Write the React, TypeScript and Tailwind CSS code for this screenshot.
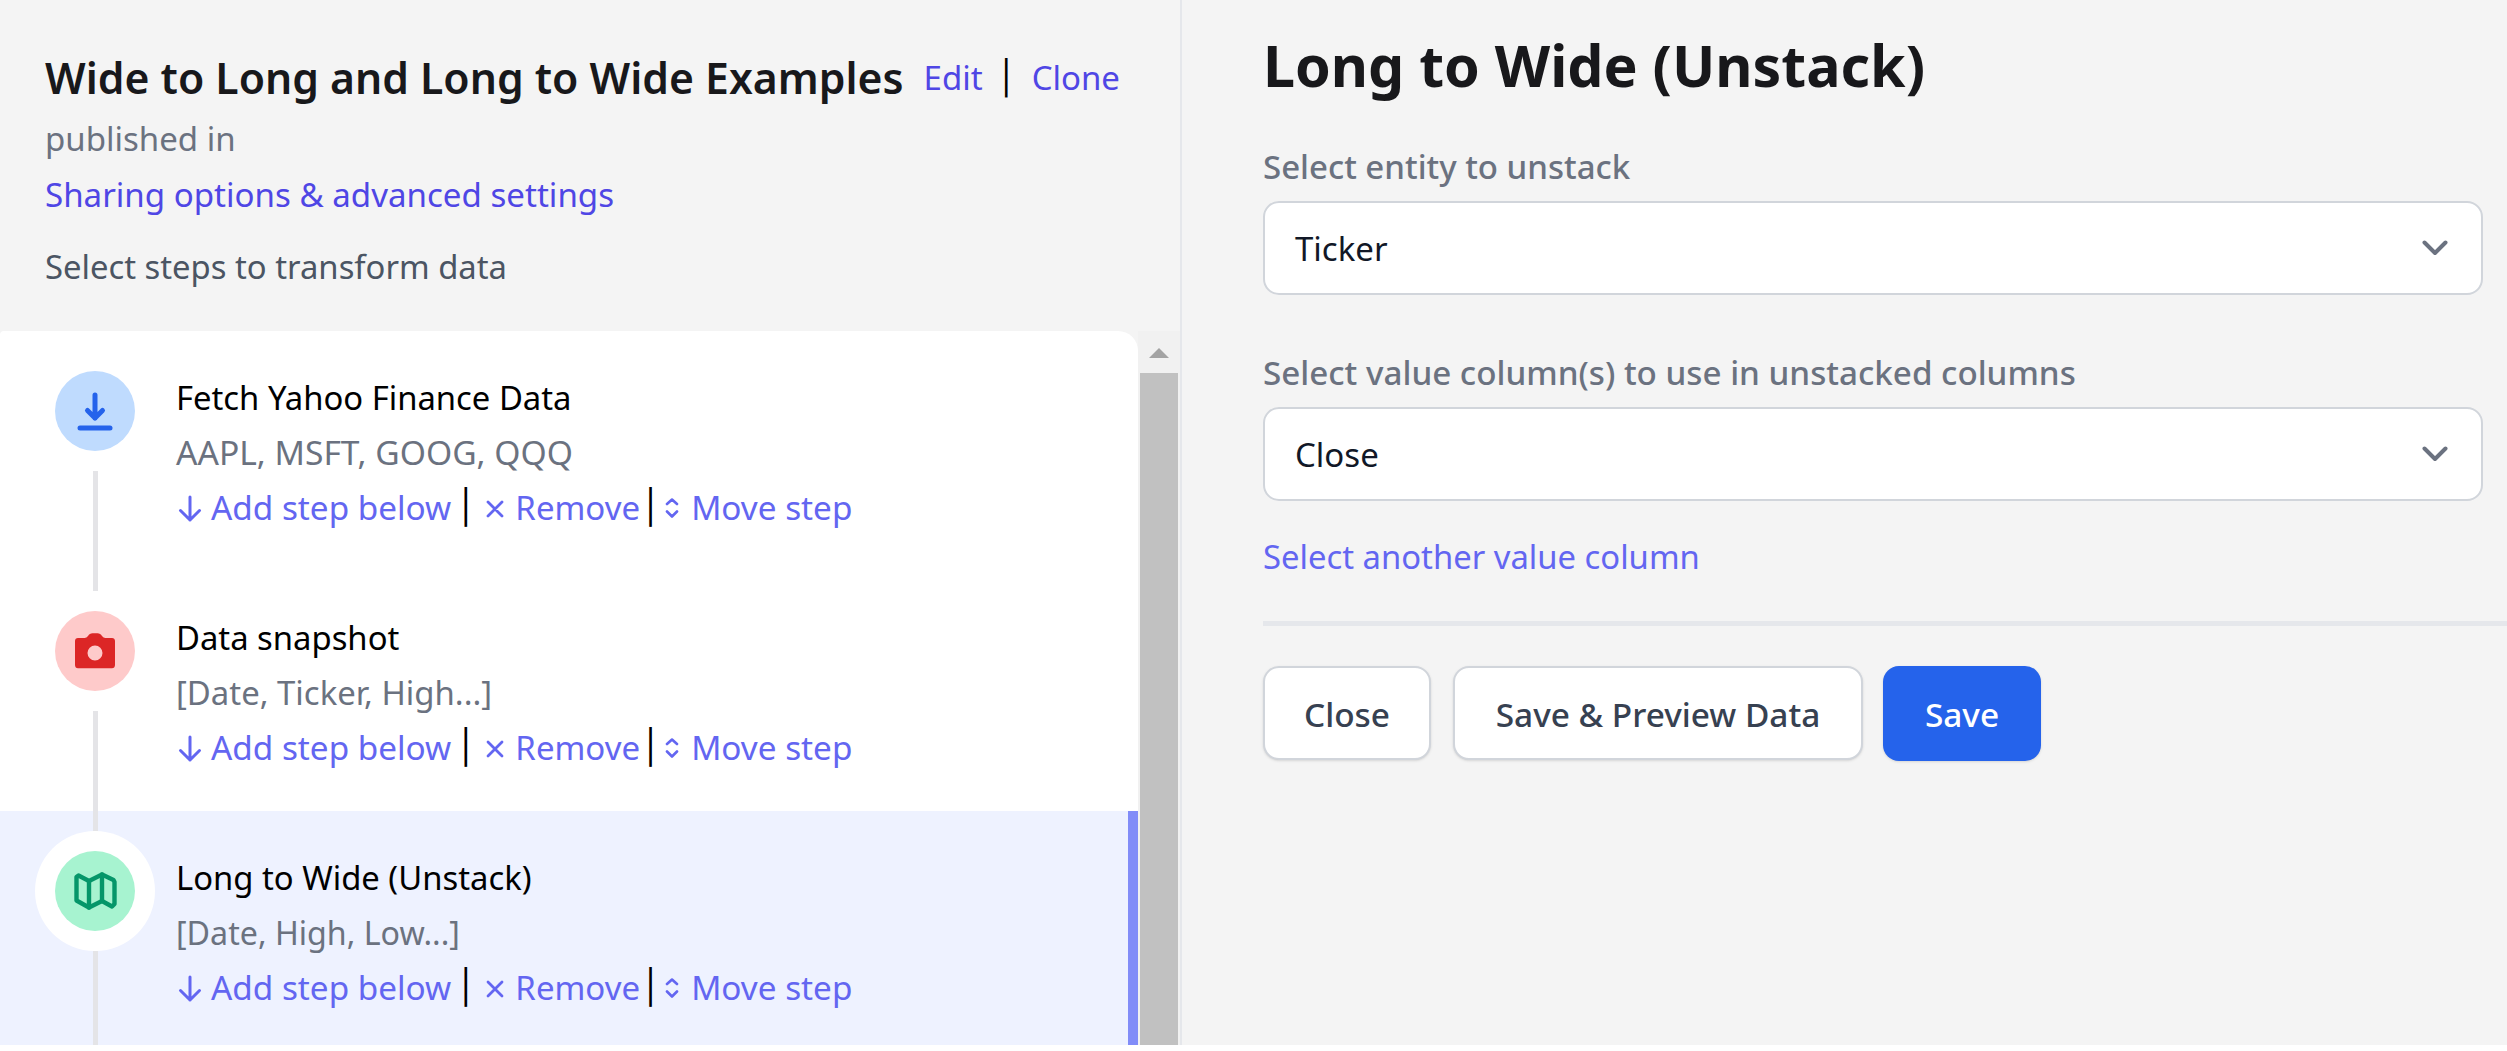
import React from "react";

function DownloadIcon() {
  return (
    <svg viewBox="0 0 80 80" className="h-[80px] w-[80px]" fill="none" stroke="#2563eb" strokeWidth="5" strokeLinecap="round" strokeLinejoin="round">
      <path d="M40 24V47M32.5 39.5L40 47L47.5 39.5" />
      <path d="M25 57H55" />
    </svg>
  );
}

function CameraIcon() {
  return (
    <svg viewBox="0 0 80 80" className="h-[80px] w-[80px]">
      <path
        fill="#dc2626"
        fillRule="evenodd"
        d="M23 27H29.5C31 27 32 26.2 33 25C34.2 23.3 35.5 22.3 37.5 22.3H42.5C44.5 22.3 45.8 23.3 47 25C48 26.2 49 27 50.5 27H57C58.8 27 60 28.2 60 30V54C60 56 58.8 57.3 57 57.3H23C21.2 57.3 20 56 20 54V30C20 28.2 21.2 27 23 27ZM40 34.5A7.5 7.5 0 1 0 40 49.5A7.5 7.5 0 1 0 40 34.5Z"
      />
    </svg>
  );
}

function MapIcon() {
  return (
    <svg viewBox="0 0 80 80" className="h-[80px] w-[80px]" fill="none" stroke="#059669" strokeWidth="4.4" strokeLinecap="round" strokeLinejoin="round">
      <path d="M21.5 26L23.5 24.5L34 30L47 23.5L58.5 29L59.5 31V53L57 55.5L47 50L34 56.5L21.5 49.5V26Z" />
      <path d="M34 30V56.5M47 23.5V50" />
    </svg>
  );
}

function Actions() {
  return (
    <div className="flex h-[55px] items-center text-[33.3px] leading-[55px] text-[#6366f1]">
      <svg viewBox="0 0 24 28" className="mt-[4px] ml-[2px] h-[28px] w-[24px]" fill="none" stroke="currentColor" strokeWidth="3" strokeLinecap="round" strokeLinejoin="round">
        <path d="M12 2V25M2.5 15.5L12 25L21.5 15.5" />
      </svg>
      <span className="ml-[9px]">Add step below</span>
      <span className="ml-[9px] font-[Inter,sans-serif] text-black">|</span>
      <svg viewBox="0 0 20 20" className="mt-[4px] ml-[14px] h-[20px] w-[20px]" fill="none" stroke="currentColor" strokeWidth="2.8" strokeLinecap="round">
        <path d="M3 3L17 17M17 3L3 17" />
      </svg>
      <span className="ml-[10px] text-[33px]">Remove</span>
      <span className="ml-[5px] font-[Inter,sans-serif] text-black">|</span>
      <svg viewBox="0 0 14 20" className="mt-[2px] ml-[9px] h-[20px] w-[14px]" fill="none" stroke="currentColor" strokeWidth="2.6" strokeLinecap="round" strokeLinejoin="round">
        <path d="M2 6L7 1.5L12 6M2 13.5L7 18.5L12 13.5" />
      </svg>
      <span className="ml-[12px]">Move step</span>
    </div>
  );
}

function Step({
  title,
  desc,
  circle,
  icon,
  active,
  descClass,
}: {
  title: string;
  desc: string;
  circle: string;
  icon: React.ReactNode;
  active?: boolean;
  descClass: string;
}) {
  return (
    <div className={active ? "relative h-[240px] shrink-0 bg-[#eef2ff]" : "relative h-[240px] shrink-0"}>
      <div className="absolute top-[140px] left-[93px] z-10 h-[120px] w-[5px] bg-[#e4e4e7]" />
      {active && <div className="absolute top-0 right-0 h-full w-[10px] bg-[#818cf8]" />}
      <div className="flex pt-[39px] pl-[55px]">
        <div className={`relative z-20 mt-px flex h-[80px] w-[80px] shrink-0 items-center justify-center rounded-full ${circle} ${active ? "ring-[20px] ring-white" : ""}`}>
          {icon}
        </div>
        <div className="ml-[41px] flex flex-col">
          <div className="text-[32.8px] leading-[56px] text-black">{title}</div>
          <div className={`-mt-[1.5px] leading-[55px] text-[#6b7280] ${descClass}`}>{desc}</div>
          <Actions />
        </div>
      </div>
    </div>
  );
}

function SelectBox({ value }: { value: string }) {
  return (
    <div className="flex h-[94px] items-center justify-between rounded-[16px] border-2 border-[#d1d5db] bg-white pr-[33px] pl-[30px] text-[33px] text-[#111827]">
      <span className="pt-[2px]">{value}</span>
      <svg viewBox="0 0 26 16" className="h-[16px] w-[26px]" fill="none" stroke="#6b7280" strokeWidth="4" strokeLinecap="round" strokeLinejoin="round">
        <path d="M2.5 2.5L13 13L23.5 2.5" />
      </svg>
    </div>
  );
}

export default function App() {
  return (
    <div className="h-[1051px] w-full overflow-hidden bg-white font-['Noto_Sans',sans-serif]">
      <div className="flex h-[1045px] bg-[#f4f4f4]">
        <aside className="flex w-[1182px] shrink-0 flex-col border-r-2 border-[#e5e7eb]">
          <header className="h-[331px] shrink-0 pt-[50px] pl-[45px]">
            <div className="flex h-[56px] items-center text-[33px] leading-[56px]">
              <h1 className="text-[42.7px] font-semibold text-[#18181b]">Wide to Long and Long to Wide Examples</h1>
              <a className="ml-[20px] text-[#4f46e5]">Edit</a>
              <span className="ml-[18px] font-[Inter,sans-serif] text-black">|</span>
              <a className="ml-[20px] text-[#4f46e5]">Clone</a>
            </div>
            <div className="mt-[5px] text-[33px] leading-[56px] text-[#6b7280]">published in</div>
            <a className="block text-[33.1px] leading-[56px] text-[#4f46e5]">Sharing options &amp; advanced settings</a>
            <div className="mt-[16px] text-[32.8px] leading-[56px] text-[#4b5563]">Select steps to transform data</div>
          </header>
          <div className="flex min-h-0 flex-1">
            <div className="w-[1138px] shrink-0 overflow-hidden rounded-tl-[4px] rounded-tr-[20px] bg-white">
              <Step title="Fetch Yahoo Finance Data" desc="AAPL, MSFT, GOOG, QQQ" descClass="text-[33.6px]" circle="bg-[#bfdbfe]" icon={<DownloadIcon />} />
              <Step title="Data snapshot" desc="[Date, Ticker, High...]" descClass="text-[32.9px]" circle="bg-[#fecaca]" icon={<CameraIcon />} />
              <Step title="Long to Wide (Unstack)" desc="[Date, High, Low...]" descClass="text-[32.2px]" circle="bg-[#a7f3d0]" icon={<MapIcon />} active />
            </div>
            <div className="flex flex-1 flex-col bg-[#f1f1f1] px-[2px]">
              <div className="flex h-[42px] shrink-0 justify-center pt-[17px]">
                <svg viewBox="0 0 20 10" className="h-[10px] w-[20px]">
                  <path d="M10 0L20 10H0Z" fill="#a3a3a3" />
                </svg>
              </div>
              <div className="flex-1 bg-[#c1c1c1]" />
            </div>
          </div>
        </aside>
        <main className="min-w-0 flex-1 pt-[35px] pr-[24px] pl-[81px]">
          <h2 className="text-[57.3px] leading-[60px] font-bold text-[#18181b]">Long to Wide (Unstack)</h2>
          <div className="mt-[44px] text-[33px] leading-[56px] font-medium text-[#6b7280]">Select entity to unstack</div>
          <div className="mt-[6px]"><SelectBox value="Ticker" /></div>
          <div className="mt-[50px] text-[33.2px] leading-[56px] font-medium text-[#6b7280]">Select value column(s) to use in unstacked columns</div>
          <div className="mt-[6px]"><SelectBox value="Close" /></div>
          <a className="mt-[28px] block text-[32.8px] leading-[56px] text-[#6366f1]">Select another value column</a>
          <div className="mt-[36px] -mr-[24px] h-[5px] bg-[#e5e7eb]" />
          <div className="mt-[40px] flex items-start text-[33.4px] font-medium">
            <button className="h-[94px] w-[168px] rounded-[16px] border-2 border-[#d1d5db] bg-white pt-[2px] text-[#374151] shadow-sm">Close</button>
            <button className="ml-[22px] h-[94px] w-[410px] rounded-[16px] border-2 border-[#d1d5db] bg-white pt-[2px] text-[#374151] shadow-sm">Save &amp; Preview Data</button>
            <button className="ml-[20px] h-[95px] w-[158px] rounded-[16px] bg-[#2563eb] pt-[2px] text-white shadow-sm">Save</button>
          </div>
        </main>
      </div>
    </div>
  );
}
